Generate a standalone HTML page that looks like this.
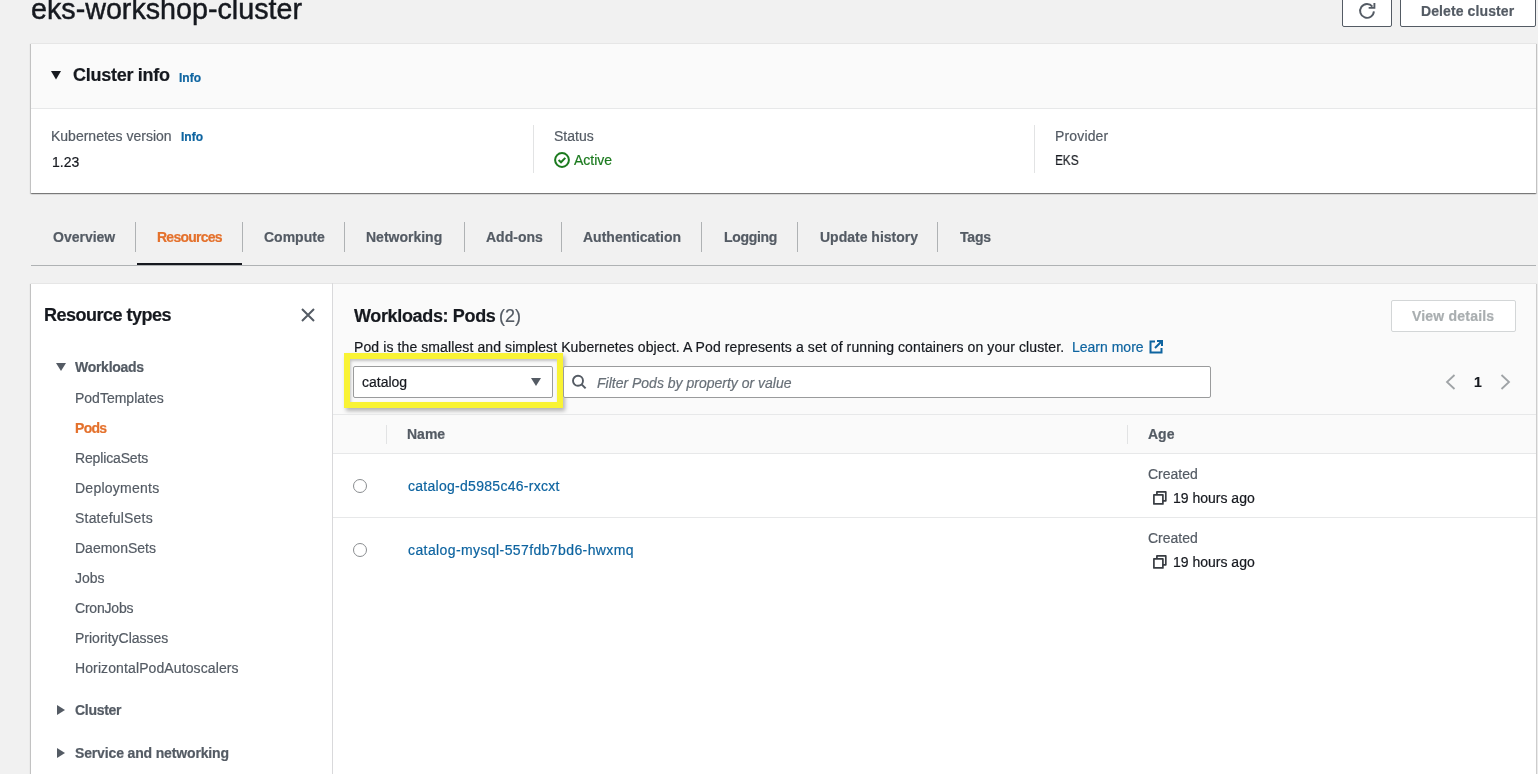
<!DOCTYPE html>
<html><head><meta charset="utf-8">
<style>
*{box-sizing:border-box;margin:0;padding:0}
html,body{width:1538px;height:774px;overflow:hidden;background:#f1f1f1;font-family:"Liberation Sans",sans-serif;color:#16191f}
.a{position:absolute}
.t{position:absolute;white-space:nowrap;line-height:normal;will-change:transform;-webkit-text-stroke:0.2px currentColor}
.f14{font-size:14px}
.b{font-weight:bold}
.gray{color:#545b64}
.link{color:#0e64a0}
.card{position:absolute;background:#fff;box-shadow:0 1px 1px 0 rgba(0,0,0,.3),1px 1px 1px 0 rgba(0,0,0,.15),-1px 1px 1px 0 rgba(0,0,0,.15);border-top:1px solid #e6e6e6}
.btn{position:absolute;background:#fff;border:1px solid #545b64;border-radius:2px}
.vd{position:absolute;width:1px;background:#e2e3e4}
.td{position:absolute;width:1px;background:#afb2b4}
</style></head><body>

<!-- title -->
<div class="t" style="left:31px;top:-7px;font-size:28.7px;color:#16191f;-webkit-text-stroke:0.45px #16191f">eks-workshop-cluster</div>

<!-- top buttons -->
<div class="btn" style="left:1342px;top:-6px;width:50px;height:33px"></div>
<svg class="a" style="left:1358px;top:2px" width="20" height="20" viewBox="0 0 20 20">
  <path d="M14.4 4.6 A6.9 6.9 0 1 0 15.9 9.4" fill="none" stroke="#545b64" stroke-width="1.9"/>
  <path d="M11.6 5.9 H16.4 V2" fill="none" stroke="#545b64" stroke-width="1.9" stroke-linecap="square"/>
</svg>
<div class="btn" style="left:1400px;top:-6px;width:136px;height:33px"></div>
<div class="t f14 b gray" style="left:1421px;top:3.3px;letter-spacing:0.1px">Delete cluster</div>

<!-- cluster info card -->
<div class="card" style="left:31px;top:43px;width:1505px;height:150px">
  <div class="a" style="left:0;top:0;width:100%;height:65px;background:#fafafa;border-bottom:1px solid #e7e8e9"></div>
</div>
<svg class="a" style="left:51px;top:71px" width="10" height="9" viewBox="0 0 10 9"><path d="M0 0 H10 L5 8.5 Z" fill="#16191f"/></svg>
<div class="t b" style="left:72.8px;top:65.4px;font-size:18px;letter-spacing:-0.27px">Cluster info</div>
<div class="t b link" style="left:179px;top:70.8px;font-size:12px">Info</div>

<div class="t f14 gray" style="left:51px;top:128.4px">Kubernetes version</div>
<div class="t b link" style="left:180.5px;top:130.2px;font-size:12px">Info</div>
<div class="t f14" style="left:52px;top:154.1px">1.23</div>

<div class="vd" style="left:533px;top:125px;height:48px"></div>
<div class="t f14 gray" style="left:554px;top:128.2px">Status</div>
<svg class="a" style="left:554px;top:152px" width="16" height="16" viewBox="0 0 16 16">
  <circle cx="8" cy="8" r="6.9" fill="none" stroke="#1b7a1e" stroke-width="2"/>
  <path d="M4.6 8.1 L7 10.3 L11.3 5.9" fill="none" stroke="#1b7a1e" stroke-width="2"/>
</svg>
<div class="t f14" style="left:574px;top:152.2px;color:#1b7a1e">Active</div>

<div class="vd" style="left:1034px;top:125px;height:48px"></div>
<div class="t f14 gray" style="left:1055px;top:128.2px;letter-spacing:0.15px">Provider</div>
<div class="t f14" style="left:1054.8px;top:152.2px;display:inline-block;transform:scaleX(0.84);transform-origin:0 0">EKS</div>

<!-- tabs -->
<div class="a" style="left:31px;top:265px;width:1505px;height:1px;background:#afb2b4"></div>
<div class="t f14 b gray" style="left:52.5px;top:228.8px">Overview</div>
<div class="td" style="left:135px;top:222px;height:30px"></div>
<div class="t f14 b" style="left:157px;top:228.8px;color:#e4712c;letter-spacing:-0.75px">Resources</div>
<div class="a" style="left:137px;top:263px;width:105px;height:2px;background:#16191f"></div>
<div class="td" style="left:242px;top:222px;height:30px"></div>
<div class="t f14 b gray" style="left:264px;top:228.8px">Compute</div>
<div class="td" style="left:344px;top:222px;height:30px"></div>
<div class="t f14 b gray" style="left:366px;top:228.8px">Networking</div>
<div class="td" style="left:464px;top:222px;height:30px"></div>
<div class="t f14 b gray" style="left:485.5px;top:228.8px">Add-ons</div>
<div class="td" style="left:561px;top:222px;height:30px"></div>
<div class="t f14 b gray" style="left:583px;top:228.8px">Authentication</div>
<div class="td" style="left:701px;top:222px;height:30px"></div>
<div class="t f14 b gray" style="left:723.5px;top:228.8px;letter-spacing:-0.3px">Logging</div>
<div class="td" style="left:797px;top:222px;height:30px"></div>
<div class="t f14 b gray" style="left:819.5px;top:228.8px">Update history</div>
<div class="td" style="left:937px;top:222px;height:30px"></div>
<div class="t f14 b gray" style="left:959.5px;top:228.8px;letter-spacing:-0.2px">Tags</div>

<!-- left panel -->
<div class="card" style="left:31px;top:283px;width:302px;height:520px"></div>
<div class="t b" style="left:43.5px;top:304.5px;font-size:18px;letter-spacing:-0.5px">Resource types</div>
<svg class="a" style="left:301px;top:308px" width="14" height="14" viewBox="0 0 14 14"><path d="M1 1 L13 13 M13 1 L1 13" stroke="#545b64" stroke-width="2"/></svg>

<svg class="a" style="left:56px;top:363px" width="10" height="8" viewBox="0 0 10 8"><path d="M0 0 H10 L5 8 Z" fill="#545b64"/></svg>
<div class="t f14 b gray" style="left:75px;top:358.8px;letter-spacing:-0.28px">Workloads</div>
<div class="t f14 gray" style="left:75px;top:389.5px">PodTemplates</div>
<div class="t f14 b" style="left:75px;top:419.5px;color:#e4712c;letter-spacing:-0.7px">Pods</div>
<div class="t f14 gray" style="left:75px;top:449.5px;letter-spacing:-0.15px">ReplicaSets</div>
<div class="t f14 gray" style="left:75px;top:479.5px;letter-spacing:0.25px">Deployments</div>
<div class="t f14 gray" style="left:75px;top:509.5px;letter-spacing:0.2px">StatefulSets</div>
<div class="t f14 gray" style="left:75px;top:539.5px">DaemonSets</div>
<div class="t f14 gray" style="left:75px;top:569.5px">Jobs</div>
<div class="t f14 gray" style="left:75px;top:599.5px;letter-spacing:-0.2px">CronJobs</div>
<div class="t f14 gray" style="left:75px;top:629.5px">PriorityClasses</div>
<div class="t f14 gray" style="left:75px;top:659.5px;letter-spacing:0.11px">HorizontalPodAutoscalers</div>

<svg class="a" style="left:57px;top:705px" width="8" height="10" viewBox="0 0 8 10"><path d="M0 0 L8 5 L0 10 Z" fill="#545b64"/></svg>
<div class="t f14 b gray" style="left:75px;top:701.8px;letter-spacing:-0.3px">Cluster</div>
<svg class="a" style="left:57px;top:748px" width="8" height="10" viewBox="0 0 8 10"><path d="M0 0 L8 5 L0 10 Z" fill="#545b64"/></svg>
<div class="t f14 b gray" style="left:75px;top:744.6px;letter-spacing:-0.15px">Service and networking</div>

<!-- right panel -->
<div class="a" style="left:332px;top:283px;width:1204px;height:520px;background:#fff;border-top:1px solid #e6e6e6;box-shadow:1px 1px 1px 0 rgba(0,0,0,.15)">
  <div class="a" style="left:0;top:0;width:100%;height:170px;background:#fafafa"></div>
  <div class="a" style="left:0;top:-1px;width:1px;height:600px;background:#d9d9db"></div>
</div>

<div class="t b" style="left:353.5px;top:305.5px;font-size:18px;letter-spacing:-0.35px">Workloads: Pods</div>
<div class="t gray" style="left:499px;top:305.5px;font-size:18px">(2)</div>

<div class="btn" style="left:1391px;top:300px;width:125px;height:32px;border-color:#d3d6d7"></div>
<div class="t f14 b" style="left:1412.3px;top:308px;color:#a9aeb0;letter-spacing:0.2px">View details</div>

<div class="t f14" style="left:353.5px;top:339px;letter-spacing:0.1px">Pod is the smallest and simplest Kubernetes object. A Pod represents a set of running containers on your cluster.</div>
<div class="t f14 link" style="left:1072px;top:339px">Learn more</div>
<svg class="a" style="left:1149px;top:340px" width="14" height="14" viewBox="0 0 14 14">
  <path d="M6 1.5 H1.5 V12.5 H12.5 V8" fill="none" stroke="#0e64a0" stroke-width="2"/>
  <path d="M8 1 H13 V6 M13 1 L6 8" fill="none" stroke="#0e64a0" stroke-width="2"/>
</svg>

<!-- yellow highlight -->
<div class="a" style="left:344px;top:352.5px;width:219px;height:55px;border:6px solid #f9f334;box-shadow:2px 3px 4px rgba(0,0,0,.28), inset 1px 2px 3px rgba(0,0,0,.22)"></div>

<!-- select -->
<div class="a" style="left:353px;top:366px;width:200px;height:32px;background:#fff;border:1px solid #9a9b9c;border-radius:2px"></div>
<div class="t f14" style="left:361.8px;top:374px">catalog</div>
<svg class="a" style="left:531px;top:378px" width="10" height="8" viewBox="0 0 10 8"><path d="M0 0 H10 L5 8 Z" fill="#545b64"/></svg>

<!-- search -->
<div class="a" style="left:563px;top:366px;width:648px;height:32px;background:#fff;border:1px solid #9a9b9c;border-radius:2px"></div>
<svg class="a" style="left:571px;top:374px" width="16" height="16" viewBox="0 0 16 16">
  <circle cx="7" cy="6.8" r="5" fill="none" stroke="#545b64" stroke-width="1.9"/>
  <path d="M10.6 10.4 L14.6 14.4" stroke="#545b64" stroke-width="2"/>
</svg>
<div class="t f14" style="left:596.5px;top:374.5px;font-style:italic;color:#687078">Filter Pods by property or value</div>

<!-- pagination -->
<svg class="a" style="left:1445px;top:374px" width="11" height="16" viewBox="0 0 11 16"><path d="M9.5 1 L2 8 L9.5 15" fill="none" stroke="#9fa3a6" stroke-width="1.8"/></svg>
<div class="t f14 b" style="left:1474px;top:374px">1</div>
<svg class="a" style="left:1500px;top:374px" width="11" height="16" viewBox="0 0 11 16"><path d="M1.5 1 L9 8 L1.5 15" fill="none" stroke="#9fa3a6" stroke-width="1.8"/></svg>

<!-- table header -->
<div class="vd" style="left:386px;top:425px;height:19px"></div>
<div class="t f14 b gray" style="left:406.8px;top:426.2px">Name</div>
<div class="vd" style="left:1127px;top:425px;height:19px"></div>
<div class="t f14 b gray" style="left:1147.8px;top:426px">Age</div>
<div class="a" style="left:333px;top:414px;width:1203px;height:1px;background:#e7e8e9"></div>
<div class="a" style="left:333px;top:453px;width:1203px;height:1px;background:#e7e8e9"></div>
<div class="a" style="left:333px;top:517px;width:1203px;height:1px;background:#e7e8e9"></div>

<!-- rows -->
<div class="a" style="left:353px;top:479px;width:14px;height:14px;border:1.2px solid #8a8d90;border-radius:50%;background:#fff"></div>
<div class="t f14 link" style="left:407.5px;top:478px;letter-spacing:0.28px">catalog-d5985c46-rxcxt</div>
<div class="t f14 gray" style="left:1147.8px;top:466px">Created</div>
<svg class="a" style="left:1152px;top:490px" width="15" height="15" viewBox="0 0 15 15">
  <path d="M1.9 4.8 H10.9 V13.9 H1.9 Z" fill="none" stroke="#383c42" stroke-width="1.7" stroke-linejoin="round"/>
  <path d="M4.9 4.8 V1.9 H13.8 V10.8 H10.9" fill="none" stroke="#383c42" stroke-width="1.7" stroke-linejoin="round"/>
</svg>
<div class="t f14" style="left:1172.8px;top:489.7px">19 hours ago</div>

<div class="a" style="left:353px;top:543px;width:14px;height:14px;border:1.2px solid #8a8d90;border-radius:50%;background:#fff"></div>
<div class="t f14 link" style="left:407.5px;top:542px;letter-spacing:0.4px">catalog-mysql-557fdb7bd6-hwxmq</div>
<div class="t f14 gray" style="left:1147.8px;top:530px">Created</div>
<svg class="a" style="left:1152px;top:554px" width="15" height="15" viewBox="0 0 15 15">
  <path d="M1.9 4.8 H10.9 V13.9 H1.9 Z" fill="none" stroke="#383c42" stroke-width="1.7" stroke-linejoin="round"/>
  <path d="M4.9 4.8 V1.9 H13.8 V10.8 H10.9" fill="none" stroke="#383c42" stroke-width="1.7" stroke-linejoin="round"/>
</svg>
<div class="t f14" style="left:1172.8px;top:553.7px">19 hours ago</div>

</body></html>
